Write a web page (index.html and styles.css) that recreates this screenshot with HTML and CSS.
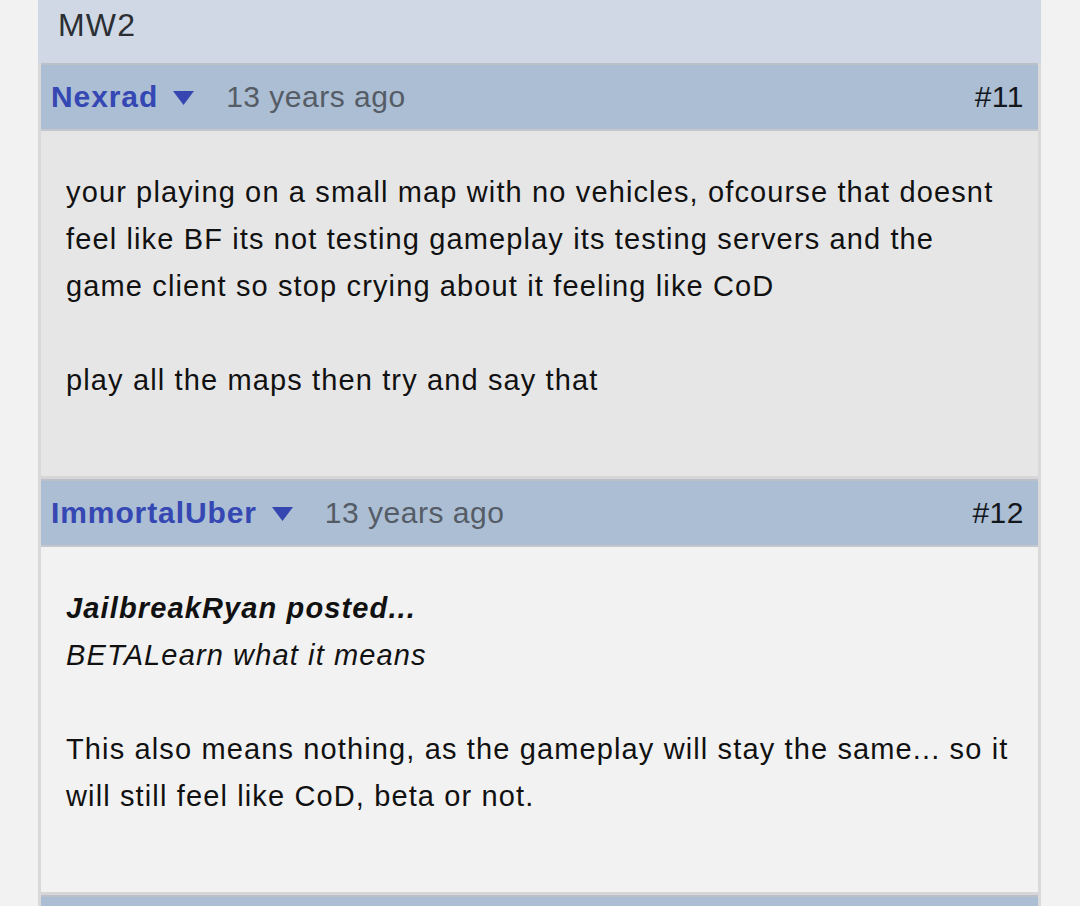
FILE: index.html
```html
<!DOCTYPE html>
<html>
<head>
<meta charset="utf-8">
<link rel="stylesheet" href="styles.css">
</head>
<body>
<div class="thread">
  <div class="title">MW2</div>

  <div class="post">
    <div class="post-head">
      <a class="author">Nexrad</a>
      <svg class="caret" width="21" height="14" viewBox="0 0 21 14"><path d="M0 0 H21 L10.5 14 Z" fill="#3546b0"/></svg>
      <span class="time">13 years ago</span>
      <span class="num">#11</span>
    </div>
    <div class="post-body dark">
      your playing on a small map with no vehicles, ofcourse that doesnt feel like BF its not testing gameplay its testing servers and the game client so stop crying about it feeling like CoD<br><br>play all the maps then try and say that
    </div>
  </div>

  <div class="post">
    <div class="post-head">
      <a class="author">ImmortalUber</a>
      <svg class="caret" width="21" height="14" viewBox="0 0 21 14"><path d="M0 0 H21 L10.5 14 Z" fill="#3546b0"/></svg>
      <span class="time">13 years ago</span>
      <span class="num">#12</span>
    </div>
    <div class="post-body light">
      <div class="quote"><b>JailbreakRyan posted...</b><br>BETALearn what it means</div>
      <br>This also means nothing, as the gameplay will stay the same... so it will still feel like CoD, beta or not.
    </div>
  </div>

  <div class="post">
    <div class="post-head stub"></div>
  </div>
</div>
</body>
</html>
```

FILE: styles.css
```css
html, body {
  margin: 0;
  padding: 0;
  background: #f2f2f2;
  font-family: "Liberation Sans", Arial, sans-serif;
  overflow: hidden;
}
.thread {
  margin-left: 38px;
  width: 1003px;
}
.title {
  height: 63px;
  background: #cfd8e4;
  color: #2b2f34;
  font-size: 32px;
  line-height: 50px;
  padding-left: 20px;
  letter-spacing: 1.2px;
  box-sizing: border-box;
}
.post {
  border-left: 3px solid #d9d9d9;
  border-right: 3px solid #d9d9d9;
}
.post-head {
  display: flex;
  align-items: center;
  height: 64px;
  background: #abbed4;
  border-top: 2px solid #bcc0c8;
  border-bottom: 2px solid #c3c7cd;
  padding: 0 14px 0 10px;
  font-size: 30px;
  letter-spacing: 0.5px;
}
.author {
  color: #3447b3;
  font-weight: bold;
  letter-spacing: 0.9px;
}
.caret {
  margin-left: 15px;
  margin-top: 2px;
}
.time {
  margin-left: 32px;
  color: #555c66;
}
.num {
  margin-left: auto;
  color: #14181c;
}
.post-body {
  padding: 38px 26px 72px 25px;
  font-size: 29px;
  line-height: 47px;
  letter-spacing: 1.13px;
  color: #111;
  border-bottom: 3px solid #d6d6d6;
}
.post-body.dark {
  background: #e6e6e6;
  height: 235px;
}
.post-body.light {
  background: #f2f2f2;
  height: 235px;
}
.quote {
  font-style: italic;
}
.stub {
  height: 20px;
}
```
